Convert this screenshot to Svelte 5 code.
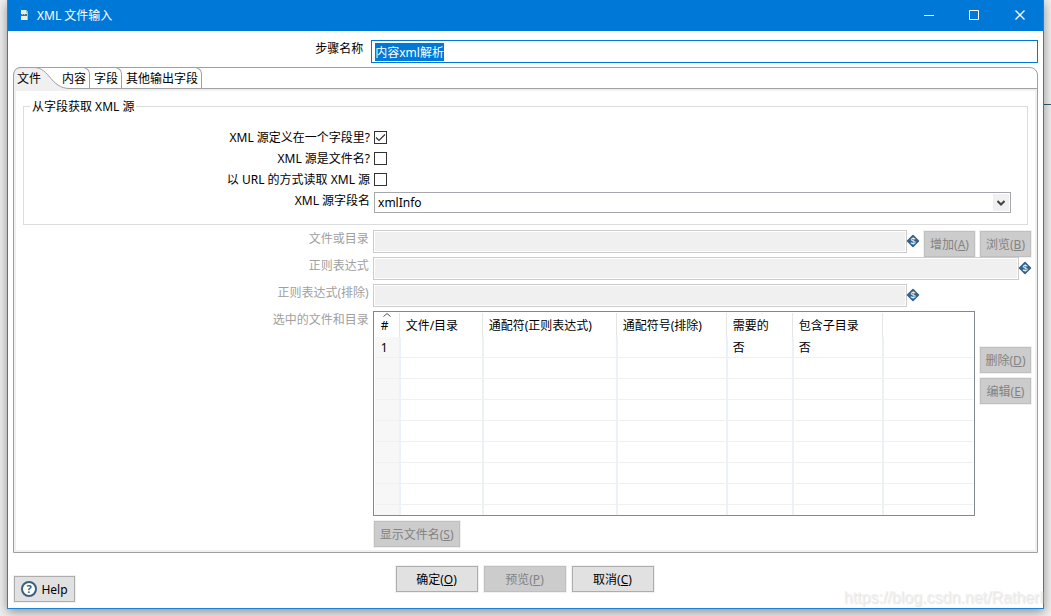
<script>
  import { onMount } from 'svelte';

  let stepName = $state('内容xml解析');
  let nameInput;

  const tabs = ['内容', '字段', '其他输出字段'];
  const options = $state([
    { id: 'in-field', label: 'XML 源定义在一个字段里?', checked: true },
    { id: 'is-file', label: 'XML 源是文件名?', checked: false },
    { id: 'from-url', label: '以 URL 的方式读取 XML 源', checked: false }
  ]);
  const columns = ['文件/目录', '通配符(正则表达式)', '通配符号(排除)', '需要的', '包含子目录', ''];
  const rows = [
    ['1', '', '', '', '否', '否', ''],
    ...Array.from({ length: 8 }, () => Array(7).fill(''))
  ];

  onMount(() => {
    nameInput.focus();
    nameInput.select();
  });
</script>

{#snippet variable()}
  <svg class="var" viewBox="0 0 12 12" aria-hidden="true">
    <path d="M6 .5 11.500 6 6 11.500 .5 6Z" fill="#39607f" stroke="#39607f" stroke-width="1.500" stroke-linejoin="round" />
    <text x="6" y="9" text-anchor="middle">$</text>
  </svg>
{/snippet}

<div class="desktop">
  <main class="window">
    <header class="titlebar">
      <svg class="app-icon" viewBox="0 0 12 12" aria-hidden="true">
        <path d="M1 0h5l2 2v8H1z" fill="#e4f1df" />
        <path d="M6 0l2 2v8H7V3H6z" fill="#9fc6b6" />
        <path d="M1 4h6v2H1z" fill="#3d7688" />
        <path d="M2 4h1v1H2zM4 4h1v1H4z" fill="#a8c8c4" />
        <path d="M9 9h1v1H9z" fill="#17568e" />
      </svg>
      <h1>XML 文件输入</h1>
      <button class="caption" aria-label="最小化">
        <svg viewBox="0 0 11 11"><path d="M1 5.5h10" /></svg>
      </button>
      <button class="caption" aria-label="最大化">
        <svg viewBox="0 0 11 11"><path d="M.5 .5h9v9h-9z" /></svg>
      </button>
      <button class="caption" aria-label="关闭">
        <svg viewBox="0 0 11 11"><path d="M.5 .5l9 9M9.5 .5l-9 9" stroke-width="1.300" /></svg>
      </button>
    </header>

    <div class="name-row">
      <label for="step-name">步骤名称</label>
      <input id="step-name" type="text" bind:this={nameInput} bind:value={stepName} />
    </div>

    <section class="folder">
      <nav class="tabs">
        <button class="tab active">
          <svg viewBox="0 0 60 22" aria-hidden="true">
            <path class="fill" d="M0 22V7Q0 .5 7 .5H20C36 .5 36 21.500 56 21.500V22Z" />
            <path class="line" d="M-.5 8Q0 .5 7 .5H20C36 .5 36 21.500 56 21.500H60" />
          </svg>
          <span>文件</span>
        </button>
        {#each tabs as tab}
          <button class="tab">{tab}</button>
        {/each}
      </nav>

      <div class="page">
        <fieldset>
          <legend>从字段获取 XML 源</legend>
          {#each options as option}
            <div class="row option">
              <label for={option.id}>{option.label}</label>
              <input id={option.id} type="checkbox" bind:checked={option.checked} />
            </div>
          {/each}
          <div class="row source">
            <label for="source-field">XML 源字段名</label>
            <div class="combo">
              <select id="source-field"><option>xmlInfo</option></select>
              <span class="arrow">
                <svg viewBox="0 0 8 6" aria-hidden="true"><path d="M.5 1l3.500 3.500 3.500-3.500" /></svg>
              </span>
            </div>
          </div>
        </fieldset>

        <div class="row field">
          <label for="path">文件或目录</label>
          <div class="controls">
            <input id="path" type="text" disabled />
            {@render variable()}
            <div class="pair">
              <button class="btn" disabled>增加(<u>A</u>)</button>
              <button class="btn" disabled>浏览(<u>B</u>)</button>
            </div>
          </div>
        </div>
        <div class="row field">
          <label for="mask">正则表达式</label>
          <div class="controls">
            <input id="mask" type="text" disabled />
            {@render variable()}
          </div>
        </div>
        <div class="row field">
          <label for="exclude">正则表达式(排除)</label>
          <div class="controls">
            <input id="exclude" type="text" disabled />
            {@render variable()}
            <div class="pair"></div>
          </div>
        </div>

        <div class="row files">
          <span class="label" id="files-label">选中的文件和目录</span>
          <div class="list">
            <div class="grid">
              <table aria-labelledby="files-label">
                <colgroup>
                  <col class="c-num" /><col class="c-file" /><col class="c-mask" />
                  <col class="c-excl" /><col class="c-req" /><col class="c-sub" /><col />
                </colgroup>
                <thead>
                  <tr>
                    <th class="num">
                      <svg viewBox="0 0 8 4" aria-hidden="true"><path d="M.5 3.500l3.500-3 3.500 3" /></svg>#
                    </th>
                    {#each columns as column}
                      <th>{column}</th>
                    {/each}
                  </tr>
                </thead>
                <tbody>
                  {#each rows as row}
                    <tr>
                      {#each row as cell}
                        <td>{cell}</td>
                      {/each}
                    </tr>
                  {/each}
                </tbody>
              </table>
            </div>
            <div class="side">
              <button class="btn" disabled>删除(<u>D</u>)</button>
              <button class="btn" disabled>编辑(<u>E</u>)</button>
            </div>
          </div>
        </div>

        <div class="row show">
          <span></span>
          <button class="btn" disabled>显示文件名(<u>S</u>)</button>
        </div>
      </div>
    </section>

    <footer>
      <button class="btn help">
        <svg viewBox="0 0 16 16" aria-hidden="true">
          <circle cx="8" cy="8" r="7" />
          <text x="8" y="12" text-anchor="middle">?</text>
        </svg>
        Help
      </button>
      <div class="actions">
        <button class="btn">确定(<u>O</u>)</button>
        <button class="btn" disabled>预览(<u>P</u>)</button>
        <button class="btn">取消(<u>C</u>)</button>
      </div>
      <span></span>
    </footer>
    <div class="watermark">https://blog.csdn.net/Ratherl</div>
  </main>
</div>

<style>
  :global(body) {
    background: #e9e9e9;
  }
  .desktop {
    box-sizing: border-box;
    min-height: 100vh;
    padding: 0 7px 7px;
    overflow: hidden;
    background: linear-gradient(#37596e, #37596e) no-repeat right 104px / 7px 1px, #efefef;
    font: 12px/17px "Noto Sans", "Noto Sans CJK SC", sans-serif;
    color: #000;
  }
  .desktop * {
    box-sizing: border-box;
  }
  button,
  input,
  select {
    font: inherit;
    color: inherit;
    margin: 0;
    border-radius: 0;
    outline: none;
  }
  .window {
    position: relative;
    border: 1px solid #1883d7;
    border-top: 0;
    background: #fff;
    box-shadow: 0 3px 10px rgba(0, 0, 0, 0.4);
  }

  /* title bar */
  .titlebar {
    display: flex;
    align-items: center;
    height: 31px;
    padding-left: 12px;
    background: #0078d7;
    color: #fff;
  }
  .app-icon {
    width: 12px;
    height: 12px;
    margin-right: 5px;
  }
  h1 {
    flex: 1;
    margin: 0;
    font-size: 12px;
    font-weight: 400;
  }
  .caption {
    display: grid;
    place-items: center;
    width: 46px;
    height: 31px;
    padding: 0;
    border: 0;
    background: none;
  }
  .caption svg {
    width: 11px;
    height: 11px;
    fill: none;
    stroke: #fff;
  }

  /* step name */
  .name-row {
    display: grid;
    grid-template-columns: 35% 1fr;
    padding-top: 9px;
  }
  .name-row label {
    padding-right: 7px;
    text-align: right;
  }
  .name-row input {
    height: 23px;
    min-width: 0;
    margin: 0 5px 0 1px;
    padding: 0 3px;
    border: 1px solid #0078d7;
  }
  .name-row input::selection {
    background: #0078d7;
    color: #fff;
  }

  /* tab folder */
  .folder {
    margin: 4px 5px 0;
    border: 1px solid #a0a0a0;
    border-radius: 8px 8px 0 0;
  }
  .tabs {
    display: flex;
    height: 21px;
    border-bottom: 1px solid #a0a0a0;
  }
  .tab {
    height: 21px;
    margin-top: -1px;
    padding: 0 3px 0 4px;
    border: solid #a0a0a0;
    border-width: 1px 1px 0 0;
    border-top-right-radius: 7px;
    background: none;
    white-space: nowrap;
  }
  .tab.active {
    position: relative;
    width: 44px;
    height: 22px;
    padding: 0 0 0 3px;
    border: 0;
    text-align: left;
  }
  .tab.active svg {
    position: absolute;
    top: 0;
    left: 0;
    width: 60px;
    height: 22px;
  }
  .tab.active span {
    position: relative;
  }
  .tab .fill {
    fill: #f0f0f0;
  }
  .tab .line {
    fill: none;
    stroke: #a0a0a0;
  }
  .page {
    padding: 7px 0 3px;
    border: 2px solid #f0f0f0;
  }

  /* rows */
  .row {
    display: grid;
    grid-template-columns: 35% 1fr;
  }
  .row label,
  .row .label {
    padding-right: 4px;
    text-align: right;
  }
  fieldset {
    min-width: 0;
    margin: 0 7px 5px 7px;
    padding: 12px 0 11px;
    border: 1px solid #dcdcdc;
  }
  fieldset .row {
    margin: 0 1px 0 -1px;
  }
  legend {
    margin-left: 6px;
    padding: 0 2px;
  }
  .option {
    height: 21px;
    align-items: center;
  }
  input[type='checkbox'] {
    appearance: none;
    width: 13px;
    height: 13px;
    border: 1px solid #333;
    background: #fff;
  }
  input[type='checkbox']:checked {
    background: url("data:image/svg+xml,%3Csvg xmlns='http://www.w3.org/2000/svg' viewBox='0 0 11 11'%3E%3Cpath d='M1 5.500l3 3L10 2.500' fill='none' stroke='%23333' stroke-width='1.200'/%3E%3C/svg%3E");
  }
  .source {
    padding-top: 2px;
  }
  .combo {
    position: relative;
    margin-right: 15px;
  }
  select {
    appearance: none;
    display: block;
    width: 100%;
    height: 21px;
    padding: 0 24px 0 3px;
    border: 1px solid #a6a6ad;
    background: #fff;
  }
  .arrow {
    position: absolute;
    top: 2px;
    right: 2px;
    display: grid;
    place-items: center;
    width: 16px;
    height: 17px;
    background: #f0f0f0;
    pointer-events: none;
  }
  .arrow svg {
    width: 8px;
    height: 6px;
    fill: none;
    stroke: #444;
    stroke-width: 2;
  }
  .field,
  .files {
    color: #a0a0a0;
  }
  .field {
    height: 27px;
  }
  .controls {
    display: flex;
    margin-right: 4px;
  }
  .controls input {
    flex: 1;
    min-width: 0;
    height: 23px;
    padding: 1px;
    border: 1px solid #ccc;
    background: #f0f0f0 content-box;
  }
  .var {
    width: 12px;
    height: 12px;
    margin-top: 5px;
    flex: none;
    overflow: visible;
  }
  .var text {
    fill: #fff;
    font: 9px "Liberation Sans", sans-serif;
  }
  .pair {
    display: flex;
    gap: 5px;
    width: 112px;
    padding: 1px 0 0 5px;
  }
  .btn {
    height: 26px;
    padding: 0;
    border: 1px solid #adadad;
    background: #e1e1e1;
    outline: 1px solid #f0f0f0;
    white-space: nowrap;
  }
  .btn:disabled {
    border-color: #bfbfbf;
    background: #ccc;
    color: #838383;
  }
  .pair .btn,
  .side .btn {
    width: 51px;
  }

  /* file list */
  .list {
    display: flex;
    align-items: center;
    gap: 5px;
    margin-right: 4px;
  }
  .grid {
    flex: 1;
    min-width: 0;
    height: 205px;
    padding: 1px;
    border: 1px solid #828790;
    overflow: hidden;
    color: #000;
  }
  table {
    width: 100%;
    table-layout: fixed;
    border-collapse: separate;
    border-spacing: 0;
  }
  .c-num { width: 26px; }
  .c-file { width: 83px; }
  .c-mask { width: 134px; }
  .c-excl { width: 110px; }
  .c-req { width: 66px; }
  .c-sub { width: 90px; }
  th {
    position: relative;
    height: 24px;
    padding: 0 0 0 5px;
    background: linear-gradient(#e5e5e5, #e5e5e5) no-repeat right 1px top / 1px 100%;
    font-weight: 400;
    text-align: left;
    white-space: nowrap;
  }
  th:last-child {
    background: none;
  }
  th.num svg {
    position: absolute;
    top: 0;
    left: 8px;
    width: 8px;
    height: 4px;
    fill: none;
    stroke: #555;
  }
  td {
    height: 21px;
    padding: 2px 0 0 5px;
    border-right: 2px solid #ebf1fb;
    border-bottom: 1px solid #f0f0f0;
    line-height: 18px;
  }
  td:first-child,
  th.num {
    padding-left: 6px;
  }
  td:first-child {
    background: #f7f7f7;
  }
  td:last-child {
    border-right: 0;
  }
  .side {
    display: flex;
    flex-direction: column;
    gap: 5px;
    margin-bottom: 76px;
  }
  .show {
    padding-top: 5px;
  }
  .show .btn {
    justify-self: start;
    width: 86px;
    margin-left: 1px;
  }

  /* footer */
  footer {
    display: grid;
    grid-template-columns: 1fr auto 1fr;
    height: 55px;
    padding: 13px 8px 6px 6px;
  }
  .actions {
    display: flex;
    gap: 6px;
  }
  .actions .btn {
    width: 82px;
  }
  .help {
    display: flex;
    align-items: center;
    justify-content: center;
    gap: 4px;
    justify-self: start;
    align-self: end;
    width: 61px;
  }
  .help svg {
    width: 16px;
    height: 16px;
  }
  .help circle {
    fill: #fff;
    stroke: #39607f;
    stroke-width: 2;
  }
  .help text {
    fill: #39607f;
    font: bold 11px "Noto Sans", sans-serif;
  }
  .watermark {
    position: absolute;
    right: 0;
    bottom: 0;
    color: #f0f0f0;
    font: 16px/20px "Liberation Sans", sans-serif;
    text-shadow: 1px 1px 1px #e2e2e2;
    pointer-events: none;
  }
</style>
